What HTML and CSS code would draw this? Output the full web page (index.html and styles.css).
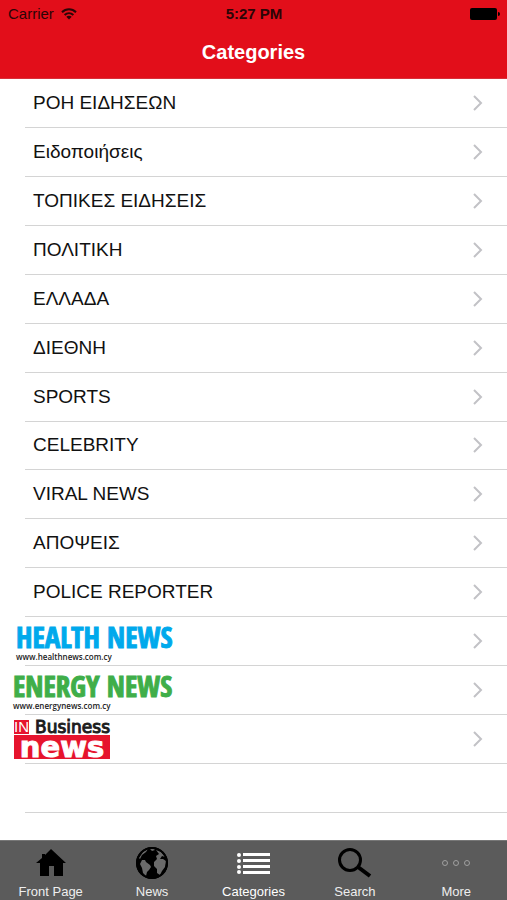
FILE: index.html
```html
<!DOCTYPE html>
<html lang="el">
<head>
    <meta charset="UTF-8">
    <meta name="viewport" content="width=device-width, initial-scale=1.0">
    <title>Categories</title>
    <link rel="stylesheet" href="styles.css">
</head>
<body>
    <header>
        <div class="status">
            <span class="carrier">
                Carrier
                <svg width="16" height="12" viewBox="0 0 16 12" fill="none" stroke="#2b0506" stroke-width="2">
                    <path d="M1 4.3C5 .3 11 .3 15 4.3"/>
                    <path d="M3.6 7C6.200 4.500 9.800 4.500 12.400 7"/>
                    <path d="M8 11.500L5.300 8.800C6.900 7.400 9.100 7.400 10.700 8.800Z" fill="#2b0506" stroke="none"/>
                </svg>
            </span>
            <span class="time">5:27 PM</span>
            <svg class="battery" width="30" height="12" viewBox="0 0 30 12">
                <rect width="27" height="12" rx="2"/>
                <path d="M28 4Q30 4 30 6T28 8Z"/>
            </svg>
        </div>
        <h1>Categories</h1>
    </header>

    <main>
        <ul class="list">
            <li><a href="#">ΡΟΗ ΕΙΔΗΣΕΩΝ</a></li>
            <li><a href="#">Ειδοποιήσεις</a></li>
            <li><a href="#">ΤΟΠΙΚΕΣ ΕΙΔΗΣΕΙΣ</a></li>
            <li><a href="#">ΠΟΛΙΤΙΚΗ</a></li>
            <li><a href="#">ΕΛΛΑΔΑ</a></li>
            <li><a href="#">ΔΙΕΘΝΗ</a></li>
            <li><a href="#">SPORTS</a></li>
            <li><a href="#">CELEBRITY</a></li>
            <li><a href="#">VIRAL NEWS</a></li>
            <li><a href="#">ΑΠΟΨΕΙΣ</a></li>
            <li><a href="#">POLICE REPORTER</a></li>
            <li class="brand">
                <a href="#">
                    <span class="logo health"><b>HEALTH NEWS</b><small>www.healthnews.com.cy</small></span>
                </a>
            </li>
            <li class="brand">
                <a href="#">
                    <span class="logo energy"><b>ENERGY NEWS</b><small>www.energynews.com.cy</small></span>
                </a>
            </li>
            <li class="brand">
                <a href="#">
                    <span class="logo business">
                        <span class="top"><i>IN</i>Business</span>
                        <span class="bottom">news</span>
                    </span>
                </a>
            </li>
            <li class="empty"></li>
        </ul>
    </main>

    <nav>
        <a href="#">
            <svg width="34" height="34" viewBox="0 0 34 34">
                <path d="M17 3L32 17H29V30H20V20H15V30H6V17H2L8 12V8H11V9Z"/>
            </svg>
            Front Page
        </a>
        <a href="#">
            <svg width="34" height="34" viewBox="0 0 34 34">
                <circle cx="17" cy="17" r="16"/>
                <path fill="#6a6a6a" d="M4 12L8 6L13 3L11 6L7 9L5 13Z"/>
                <path fill="#6a6a6a" d="M15 3L18 2L20 4L17 5Z"/>
                <path fill="#6a6a6a" d="M7 14L10 14L11 16L15 19L16 21L14 24L12 26L11 30L8 27L7 22L5 18Z"/>
                <path fill="#6a6a6a" d="M21 4L26 6L30 11L27 10L25 13L28 13L31 15L30 21L27 25L25 29L22 27L22 23L19 20L19 16L22 13L21 10L24 8Z"/>
                <circle cx="17" cy="17" r="15" fill="none" stroke="#000" stroke-width="2"/>
            </svg>
            News
        </a>
        <a href="#" class="active">
            <svg width="34" height="34" viewBox="0 0 34 34" fill="#fff">
                <circle cx="3" cy="9" r="2"/><rect x="7" y="7" width="27" height="3"/>
                <circle cx="3" cy="15" r="2"/><rect x="7" y="13" width="27" height="3"/>
                <circle cx="3" cy="21" r="2"/><rect x="7" y="19" width="27" height="3"/>
                <circle cx="3" cy="26" r="2"/><rect x="7" y="25" width="27" height="3"/>
            </svg>
            Categories
        </a>
        <a href="#">
            <svg width="34" height="34" viewBox="0 0 34 34" fill="none" stroke="#000">
                <circle cx="12" cy="14" r="10.500" stroke-width="3"/>
                <path d="M20 21L32 30" stroke-width="4"/>
            </svg>
            Search
        </a>
        <a href="#">
            <svg width="34" height="34" viewBox="0 0 34 34" fill="none" stroke="#a0a0a0">
                <circle cx="6" cy="17" r="2.500"/>
                <circle cx="17" cy="17" r="2.500"/>
                <circle cx="28" cy="17" r="2.500"/>
            </svg>
            More
        </a>
    </nav>

    <script>
        //Coloca a seta em cada linha com link
        document.querySelectorAll('.list a').forEach(function (link) {
            link.insertAdjacentHTML('beforeend', '<svg class="arrow" width="11" height="16" viewBox="0 0 11 16"><path d="M2 1L9 8L2 15"/></svg>')
        })
    </script>
</body>
</html>
```

FILE: styles.css
```css
* {
    box-sizing: border-box;
}

body {
    margin: 0;
    min-height: 100vh;
    display: flex;
    flex-direction: column;
    background-color: white;
    font-family: "Liberation Sans", Arial, sans-serif;
}

a {
    color: inherit;
    text-decoration: none;
}

header {
    height: 79px;
    background-color: #e20e1a;
    border-bottom: 1px solid #d8303a;
}

.status {
    display: grid;
    grid-template-columns: 1fr auto 1fr;
    align-items: center;
    height: 27px;
    padding: 0 7px 0 8px;
    font-size: 15px;
    color: #2b0506;
}

.carrier {
    display: flex;
    align-items: center;
    gap: 7px;
}

.time {
    font-weight: bold;
}

.battery {
    justify-self: end;
}

h1 {
    margin: 0;
    font-size: 20px;
    line-height: 51px;
    text-align: center;
    color: white;
}

main {
    flex: 1;
    display: flex;
    padding-bottom: 27px;
}

.list {
    flex: 1;
    display: grid;
    grid-auto-rows: 1fr;
    margin: 0;
    padding: 0 0 0 25px;
    list-style: none;
}

.list li {
    display: flex;
    min-height: 48px;
    border-bottom: 1px solid #d4d4d4;
}

.list a {
    flex: 1;
    display: flex;
    align-items: center;
    justify-content: space-between;
    padding: 0 24px 0 8px;
    font-size: 19px;
    color: #111;
}

.arrow {
    fill: none;
    stroke: #c2c2c6;
    stroke-width: 2;
}

/* as marcas começam antes da linha divisória */
.list .brand a {
    margin-left: -12px;
    padding-left: 0;
}

.logo {
    display: flex;
    flex-direction: column;
}

.logo b {
    font-family: "Open Sans Condensed", "Roboto Condensed", "Liberation Sans Narrow", sans-serif;
    font-size: 29px;
    line-height: 32px;
    -webkit-text-stroke: 1px;
}

.logo small {
    font-family: "Open Sans", sans-serif;
    font-size: 8px;
    font-weight: 600;
    line-height: 8px;
    color: #222;
}

.health {
    padding-left: 3px;
}

.health b {
    color: #00a9ec;
}

.energy b {
    color: #3fae49;
}

.business {
    width: 96px;
    margin-left: 1px;
}

.top {
    display: flex;
    align-items: center;
    justify-content: space-between;
    font-family: "DejaVu Sans", sans-serif;
    font-size: 17px;
    line-height: 16px;
    -webkit-text-stroke: 1px #222;
}

.top i {
    background-color: #e6142d;
    color: white;
    font-family: "Liberation Sans", Arial, sans-serif;
    font-size: 15px;
    line-height: 14px;
    font-style: normal;
    -webkit-text-stroke: 0;
}

.bottom {
    background-color: #e6142d;
    color: white;
    font-family: "DejaVu Sans", sans-serif;
    font-size: 29px;
    font-weight: bold;
    line-height: 24px;
    text-align: center;
    -webkit-text-stroke: 1px white;
}

nav {
    display: grid;
    grid-template-columns: repeat(5, 1fr);
    height: 60px;
    background-color: #5b5b5b;
    border-top: 1px solid #777;
}

nav a {
    display: flex;
    flex-direction: column;
    align-items: center;
    gap: 3px;
    padding-top: 5px;
    font-size: 13px;
    line-height: 18px;
    color: #eee;
}

.active {
    color: white;
}
```
